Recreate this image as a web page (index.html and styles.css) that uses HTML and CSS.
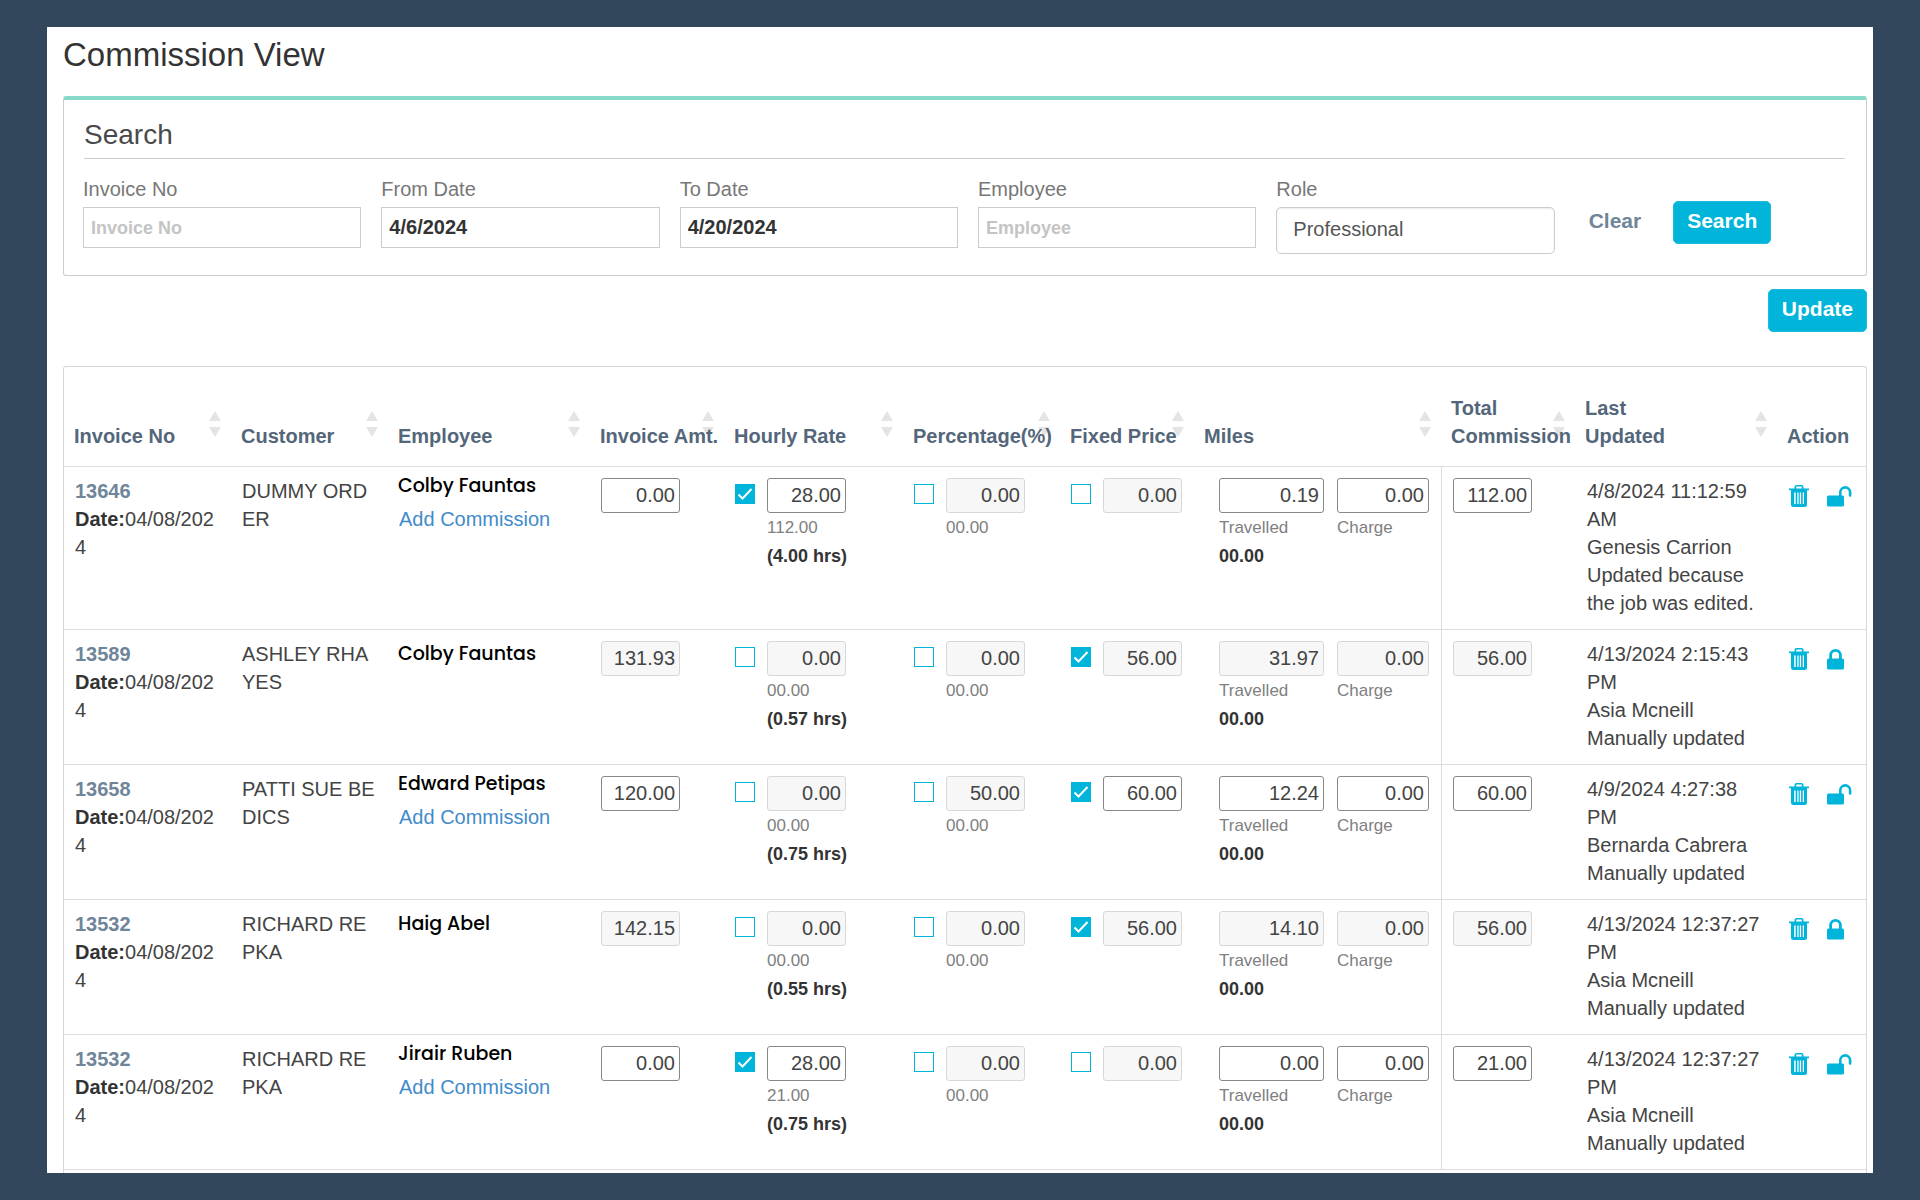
FILE: index.html
```html
<!DOCTYPE html>
<html lang="en">
<head>
    <meta charset="UTF-8">
    <meta name="viewport" content="width=device-width, initial-scale=1.0">
    <title>Commission View</title>
    <link rel="stylesheet" href="styles.css">
</head>
<body>
    <svg class="icon-defs" aria-hidden="true">
        <symbol id="icon-trash" viewBox="0 0 20 22">
            <path fill-rule="evenodd" d="M5.500 3.500V2Q5.500 0 7.500 0h5Q14.500 0 14.500 2v1.500H20v1.800H18V19.500Q18 22 15.500 22h-11Q2 22 2 19.500V5.300H0V3.500zM7.200 3.500h5.600v-2H7.200zM5.200 7.500v11.500h1.500V7.500zM8.300 7.500v11.500h1.300V7.500zM10.800 7.500v11.500h1.300V7.500zM13.700 7.500v11.500h1.300V7.500z"/>
        </symbol>
        <symbol id="icon-lock" viewBox="0 0 25 21">
            <path fill-rule="evenodd" d="M2.200 9.500V6.300a6.300 6.300 0 0 1 12.600 0v3.200H15.500Q17 9.500 17 11v8Q17 20.500 15.500 20.500h-14Q0 20.500 0 19v-8Q0 9.500 1.500 9.500zM5 9.500h7V6.300a3.500 3.500 0 0 0-7 0z"/>
        </symbol>
        <symbol id="icon-unlock" viewBox="0 0 25 21">
            <path d="M12 9.500V6.300a6.200 6.200 0 0 1 12.400 0v3.400q0 1-1.300 1t-1.300-1V6.300a3.600 3.600 0 0 0-7.200 0v3.200H15.500Q17 9.500 17 11v8Q17 20.500 15.500 20.500h-14Q0 20.500 0 19v-8Q0 9.500 1.500 9.500z"/>
        </symbol>
    </svg>

    <main class="panel">
        <h1>Commission View</h1>

        <section class="search-box">
            <h2>Search</h2>
            <form class="search-form">
                <div class="form-group">
                    <label for="invoiceNo">Invoice No</label>
                    <input type="text" id="invoiceNo" placeholder="Invoice No">
                </div>
                <div class="form-group">
                    <label for="fromDate">From Date</label>
                    <input type="text" id="fromDate" value="4/6/2024">
                </div>
                <div class="form-group">
                    <label for="toDate">To Date</label>
                    <input type="text" id="toDate" value="4/20/2024">
                </div>
                <div class="form-group">
                    <label for="employee">Employee</label>
                    <input type="text" id="employee" placeholder="Employee">
                </div>
                <div class="form-group">
                    <label for="role">Role</label>
                    <select id="role">
                        <option>Professional</option>
                    </select>
                </div>
                <div class="form-actions">
                    <button type="reset" class="btn-link">Clear</button>
                    <button type="button" class="btn">Search</button>
                </div>
            </form>
        </section>

        <div class="toolbar">
            <button type="button" class="btn">Update</button>
        </div>

        <div class="table-wrap">
            <table class="commissions">
                <colgroup>
                    <col class="col-invoice">
                    <col class="col-customer">
                    <col class="col-employee">
                    <col class="col-amount">
                    <col class="col-hourly">
                    <col class="col-percent">
                    <col class="col-fixed">
                    <col class="col-miles">
                    <col class="col-total">
                    <col class="col-updated">
                    <col class="col-action">
                </colgroup>
                <thead>
                    <tr>
                        <th class="sort">Invoice No</th>
                        <th class="sort">Customer</th>
                        <th class="sort">Employee</th>
                        <th class="sort">Invoice Amt.</th>
                        <th class="sort">Hourly Rate</th>
                        <th class="sort">Percentage(%)</th>
                        <th class="sort">Fixed Price</th>
                        <th class="sort">Miles</th>
                        <th class="sort">Total<br>Commission</th>
                        <th class="sort">Last<br>Updated</th>
                        <th>Action</th>
                    </tr>
                </thead>
                <tbody>
                    <tr>
                        <td class="invoice"><a href="#">13646</a><br><b>Date:</b>04/08/202<br>4</td>
                        <td class="customer">DUMMY ORD<br>ER</td>
                        <td class="employee with-link"><span class="name">Colby Fauntas</span><a href="#">Add Commission</a></td>
                        <td><input type="text" class="amount" aria-label="Invoice amount" value="0.00"></td>
                        <td>
                            <div class="rate">
                                <input type="checkbox" aria-label="Use hourly rate" checked>
                                <div><input type="text" class="amount" aria-label="Hourly rate" value="28.00"><small>112.00</small><strong>(4.00 hrs)</strong></div>
                            </div>
                        </td>
                        <td>
                            <div class="rate">
                                <input type="checkbox" aria-label="Use percentage">
                                <div><input type="text" class="amount" aria-label="Percentage" value="0.00" disabled><small>00.00</small></div>
                            </div>
                        </td>
                        <td>
                            <div class="rate">
                                <input type="checkbox" aria-label="Use fixed price">
                                <div><input type="text" class="amount" aria-label="Fixed price" value="0.00" disabled></div>
                            </div>
                        </td>
                        <td>
                            <div class="miles">
                                <div><input type="text" class="amount" aria-label="Miles travelled" value="0.19"><small>Travelled</small><strong>00.00</strong></div>
                                <div><input type="text" class="amount" aria-label="Miles charge" value="0.00"><small>Charge</small></div>
                            </div>
                        </td>
                        <td class="total"><input type="text" class="amount" aria-label="Total commission" value="112.00"></td>
                        <td class="updated">4/8/2024 11:12:59<br>AM<br>Genesis Carrion<br>Updated because<br>the job was edited.</td>
                        <td>
                            <div class="actions">
                                <button type="button" aria-label="Delete"><svg class="trash"><use href="#icon-trash"/></svg></button>
                                <button type="button" aria-label="Lock"><svg class="lock"><use href="#icon-unlock"/></svg></button>
                            </div>
                        </td>
                    </tr>
                    <tr>
                        <td class="invoice"><a href="#">13589</a><br><b>Date:</b>04/08/202<br>4</td>
                        <td class="customer">ASHLEY RHA<br>YES</td>
                        <td class="employee"><span class="name">Colby Fauntas</span></td>
                        <td><input type="text" class="amount" aria-label="Invoice amount" value="131.93" disabled></td>
                        <td>
                            <div class="rate">
                                <input type="checkbox" aria-label="Use hourly rate">
                                <div><input type="text" class="amount" aria-label="Hourly rate" value="0.00" disabled><small>00.00</small><strong>(0.57 hrs)</strong></div>
                            </div>
                        </td>
                        <td>
                            <div class="rate">
                                <input type="checkbox" aria-label="Use percentage">
                                <div><input type="text" class="amount" aria-label="Percentage" value="0.00" disabled><small>00.00</small></div>
                            </div>
                        </td>
                        <td>
                            <div class="rate">
                                <input type="checkbox" aria-label="Use fixed price" checked>
                                <div><input type="text" class="amount" aria-label="Fixed price" value="56.00" disabled></div>
                            </div>
                        </td>
                        <td>
                            <div class="miles">
                                <div><input type="text" class="amount" aria-label="Miles travelled" value="31.97" disabled><small>Travelled</small><strong>00.00</strong></div>
                                <div><input type="text" class="amount" aria-label="Miles charge" value="0.00" disabled><small>Charge</small></div>
                            </div>
                        </td>
                        <td class="total"><input type="text" class="amount" aria-label="Total commission" value="56.00" disabled></td>
                        <td class="updated">4/13/2024 2:15:43<br>PM<br>Asia Mcneill<br>Manually updated</td>
                        <td>
                            <div class="actions">
                                <button type="button" aria-label="Delete"><svg class="trash"><use href="#icon-trash"/></svg></button>
                                <button type="button" aria-label="Unlock"><svg class="lock"><use href="#icon-lock"/></svg></button>
                            </div>
                        </td>
                    </tr>
                    <tr>
                        <td class="invoice"><a href="#">13658</a><br><b>Date:</b>04/08/202<br>4</td>
                        <td class="customer">PATTI SUE BE<br>DICS</td>
                        <td class="employee with-link"><span class="name">Edward Petipas</span><a href="#">Add Commission</a></td>
                        <td><input type="text" class="amount" aria-label="Invoice amount" value="120.00"></td>
                        <td>
                            <div class="rate">
                                <input type="checkbox" aria-label="Use hourly rate">
                                <div><input type="text" class="amount" aria-label="Hourly rate" value="0.00" disabled><small>00.00</small><strong>(0.75 hrs)</strong></div>
                            </div>
                        </td>
                        <td>
                            <div class="rate">
                                <input type="checkbox" aria-label="Use percentage">
                                <div><input type="text" class="amount" aria-label="Percentage" value="50.00" disabled><small>00.00</small></div>
                            </div>
                        </td>
                        <td>
                            <div class="rate">
                                <input type="checkbox" aria-label="Use fixed price" checked>
                                <div><input type="text" class="amount" aria-label="Fixed price" value="60.00"></div>
                            </div>
                        </td>
                        <td>
                            <div class="miles">
                                <div><input type="text" class="amount" aria-label="Miles travelled" value="12.24"><small>Travelled</small><strong>00.00</strong></div>
                                <div><input type="text" class="amount" aria-label="Miles charge" value="0.00"><small>Charge</small></div>
                            </div>
                        </td>
                        <td class="total"><input type="text" class="amount" aria-label="Total commission" value="60.00"></td>
                        <td class="updated">4/9/2024 4:27:38<br>PM<br>Bernarda Cabrera<br>Manually updated</td>
                        <td>
                            <div class="actions">
                                <button type="button" aria-label="Delete"><svg class="trash"><use href="#icon-trash"/></svg></button>
                                <button type="button" aria-label="Lock"><svg class="lock"><use href="#icon-unlock"/></svg></button>
                            </div>
                        </td>
                    </tr>
                    <tr>
                        <td class="invoice"><a href="#">13532</a><br><b>Date:</b>04/08/202<br>4</td>
                        <td class="customer">RICHARD RE<br>PKA</td>
                        <td class="employee"><span class="name">Haig Abel</span></td>
                        <td><input type="text" class="amount" aria-label="Invoice amount" value="142.15" disabled></td>
                        <td>
                            <div class="rate">
                                <input type="checkbox" aria-label="Use hourly rate">
                                <div><input type="text" class="amount" aria-label="Hourly rate" value="0.00" disabled><small>00.00</small><strong>(0.55 hrs)</strong></div>
                            </div>
                        </td>
                        <td>
                            <div class="rate">
                                <input type="checkbox" aria-label="Use percentage">
                                <div><input type="text" class="amount" aria-label="Percentage" value="0.00" disabled><small>00.00</small></div>
                            </div>
                        </td>
                        <td>
                            <div class="rate">
                                <input type="checkbox" aria-label="Use fixed price" checked>
                                <div><input type="text" class="amount" aria-label="Fixed price" value="56.00" disabled></div>
                            </div>
                        </td>
                        <td>
                            <div class="miles">
                                <div><input type="text" class="amount" aria-label="Miles travelled" value="14.10" disabled><small>Travelled</small><strong>00.00</strong></div>
                                <div><input type="text" class="amount" aria-label="Miles charge" value="0.00" disabled><small>Charge</small></div>
                            </div>
                        </td>
                        <td class="total"><input type="text" class="amount" aria-label="Total commission" value="56.00" disabled></td>
                        <td class="updated">4/13/2024 12:37:27<br>PM<br>Asia Mcneill<br>Manually updated</td>
                        <td>
                            <div class="actions">
                                <button type="button" aria-label="Delete"><svg class="trash"><use href="#icon-trash"/></svg></button>
                                <button type="button" aria-label="Unlock"><svg class="lock"><use href="#icon-lock"/></svg></button>
                            </div>
                        </td>
                    </tr>
                    <tr>
                        <td class="invoice"><a href="#">13532</a><br><b>Date:</b>04/08/202<br>4</td>
                        <td class="customer">RICHARD RE<br>PKA</td>
                        <td class="employee with-link"><span class="name">Jirair Ruben</span><a href="#">Add Commission</a></td>
                        <td><input type="text" class="amount" aria-label="Invoice amount" value="0.00"></td>
                        <td>
                            <div class="rate">
                                <input type="checkbox" aria-label="Use hourly rate" checked>
                                <div><input type="text" class="amount" aria-label="Hourly rate" value="28.00"><small>21.00</small><strong>(0.75 hrs)</strong></div>
                            </div>
                        </td>
                        <td>
                            <div class="rate">
                                <input type="checkbox" aria-label="Use percentage">
                                <div><input type="text" class="amount" aria-label="Percentage" value="0.00" disabled><small>00.00</small></div>
                            </div>
                        </td>
                        <td>
                            <div class="rate">
                                <input type="checkbox" aria-label="Use fixed price">
                                <div><input type="text" class="amount" aria-label="Fixed price" value="0.00" disabled></div>
                            </div>
                        </td>
                        <td>
                            <div class="miles">
                                <div><input type="text" class="amount" aria-label="Miles travelled" value="0.00"><small>Travelled</small><strong>00.00</strong></div>
                                <div><input type="text" class="amount" aria-label="Miles charge" value="0.00"><small>Charge</small></div>
                            </div>
                        </td>
                        <td class="total"><input type="text" class="amount" aria-label="Total commission" value="21.00"></td>
                        <td class="updated">4/13/2024 12:37:27<br>PM<br>Asia Mcneill<br>Manually updated</td>
                        <td>
                            <div class="actions">
                                <button type="button" aria-label="Delete"><svg class="trash"><use href="#icon-trash"/></svg></button>
                                <button type="button" aria-label="Lock"><svg class="lock"><use href="#icon-unlock"/></svg></button>
                            </div>
                        </td>
                    </tr>
                </tbody>
            </table>
        </div>
    </main>
</body>
</html>
```
FILE: styles.css
```css
* {
    box-sizing: border-box;
}
body {
    margin: 0;
    padding: 27px 47px;
    background-color: #32475c;
    font-family: Arial, "Liberation Sans", sans-serif;
    font-size: 20px;
    line-height: 28px;
    color: #444;
}
input,
select,
button {
    font-family: inherit;
    font-size: 20px;
}
a {
    text-decoration: none;
}
.icon-defs {
    display: none;
}
.panel {
    display: flex;
    flex-direction: column;
    height: calc(100vh - 54px);
    padding: 8px 6px 0 16px;
    overflow: hidden;
    background-color: #fff;
}
h1 {
    margin: 0 0 21px;
    font-size: 33px;
    font-weight: normal;
    line-height: 40px;
    color: #333;
}

/* search box */
.search-box {
    padding: 19px 13px 21px 19px;
    border: 1px solid #ccc;
    border-top: 4px solid #87d9ca;
    border-radius: 3px;
}
h2 {
    margin: 0 8px 16px 1px;
    padding-bottom: 7px;
    border-bottom: 1px solid #ccc;
    font-size: 28px;
    font-weight: normal;
    line-height: 32px;
    color: #4a4a4a;
}
.search-form {
    display: grid;
    grid-template-columns: repeat(6, 1fr);
    gap: 20px;
}
.form-group label {
    display: block;
    margin-bottom: 4px;
    color: #777;
}
.form-group input {
    display: block;
    width: 100%;
    height: 41px;
    padding: 0 7px;
    border: 1px solid #ccc;
    font-weight: bold;
    color: #333;
}
.form-group input::placeholder {
    font-size: 18px;
    color: #c4c4c4;
}
.form-group select {
    display: block;
    width: 100%;
    height: 47px;
    padding: 0 16px 3px;
    border: 1px solid #ccc;
    border-radius: 5px;
    background-color: #fff;
    box-shadow: inset 0 1px 2px rgba(0,0,0,0.08);
    color: #555;
    appearance: none;
}
.form-actions {
    display: flex;
    align-items: flex-start;
    gap: 32px;
    padding: 26px 0 0 14px;
}
.btn,
.btn-link {
    height: 43px;
    padding: 0 13px 3px;
    border: 1px solid #1abcdd;
    border-radius: 5px;
    background-color: #00b4da;
    font-size: 21px;
    font-weight: bold;
    color: #fff;
    cursor: pointer;
}
.btn-link {
    padding: 0 0 3px;
    border: none;
    background: none;
    color: #6f8599;
}
.toolbar {
    display: flex;
    justify-content: flex-end;
    margin: 13px 0 34px;
}

/* commission table */
.table-wrap {
    flex: 1;
    border: 1px solid #d8d8d8;
    border-bottom: none;
    border-radius: 3px 3px 0 0;
}
.commissions {
    width: 100%;
    table-layout: fixed;
    border-collapse: separate;
    border-spacing: 0;
}
.col-invoice {
    width: 167px;
}
.col-customer {
    width: 157px;
}
.col-employee {
    width: 202px;
}
.col-amount {
    width: 134px;
}
.col-hourly {
    width: 179px;
}
.col-percent {
    width: 157px;
}
.col-fixed {
    width: 134px;
}
.col-miles {
    width: 247px;
}
.col-total {
    width: 134px;
}
.col-updated {
    width: 202px;
}
.col-action {
    width: 89px;
}
th {
    position: relative;
    z-index: 0;
    height: 100px;
    padding: 0 0 16px 10px;
    border-bottom: 1px solid #ddd;
    text-align: left;
    vertical-align: bottom;
    white-space: nowrap;
    color: #54667a;
}
/* sort arrows sit behind the longer headings */
.sort::before,
.sort::after {
    content: "";
    position: absolute;
    z-index: -1;
    right: 10px;
    border: 6px solid transparent;
}
.sort::before {
    bottom: 45px;
    border-top: none;
    border-bottom: 10px solid #e4e4e4;
}
.sort::after {
    bottom: 29px;
    border-top: 10px solid #e4e4e4;
    border-bottom: none;
}
td {
    padding: 11px 0 10px 11px;
    border-bottom: 1px solid #ddd;
    vertical-align: top;
}
.invoice,
.customer,
.employee,
.updated {
    padding-top: 10px;
    padding-bottom: 12px;
    white-space: nowrap;
}
.invoice a {
    font-weight: bold;
    color: #6f8599;
}
.invoice b {
    color: #333;
}
.employee {
    padding-left: 10px;
}
.employee a {
    display: block;
    padding-left: 1px;
    color: #428bca;
}
.name {
    display: block;
    font-family: Poppins, Inter, sans-serif;
    font-size: 19px;
    font-weight: 500;
    color: #000;
}
.with-link {
    padding-top: 5px;
}
.with-link .name {
    margin-bottom: 5px;
}
.total {
    border-left: 1px solid #ddd;
}
.updated {
    padding-left: 12px;
}
.amount {
    display: block;
    width: 79px;
    height: 35px;
    margin-bottom: 1px;
    padding: 0 4px;
    border: 1px solid #888;
    border-radius: 3px;
    background-color: #fff;
    text-align: right;
    color: #444;
}
.amount:disabled {
    border-color: #d8d8d8;
    background-color: #f7f7f7;
}
.rate {
    display: flex;
    gap: 12px;
}
.rate input[type="checkbox"] {
    width: 20px;
    height: 20px;
    margin: 6px 0 0;
    border: 1px solid #00b4da;
    background-color: #fff;
    appearance: none;
}
.rate input[type="checkbox"]:checked {
    background: #00b4da url("data:image/svg+xml,%3Csvg xmlns='http://www.w3.org/2000/svg' viewBox='0 0 18 18'%3E%3Cpath d='M2.500 9.500l4 4 9-9.500' fill='none' stroke='%23fff' stroke-width='2'/%3E%3C/svg%3E") center no-repeat;
}
small,
strong {
    display: block;
}
small {
    font-size: 17px;
    color: #808080;
}
strong {
    font-size: 18px;
    white-space: nowrap;
    color: #333;
}
.miles {
    display: flex;
    gap: 13px;
    padding-left: 14px;
}
.miles .amount {
    width: 92px;
}
.miles div:first-child .amount {
    width: 105px;
}
.actions {
    display: flex;
    gap: 18px;
    padding: 7px 0 0 1px;
}
.actions button {
    display: block;
    padding: 0;
    border: none;
    background: none;
    line-height: 0;
    cursor: pointer;
}
.actions svg {
    display: block;
    fill: #00b4da;
}
.trash {
    width: 20px;
    height: 22px;
}
.lock {
    width: 25px;
    height: 21px;
}
```
